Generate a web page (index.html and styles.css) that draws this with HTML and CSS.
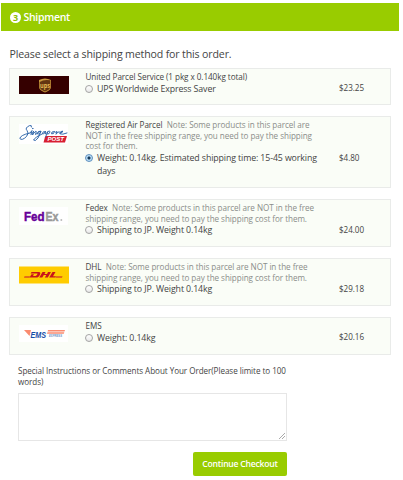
FILE: index.html
```html
<!DOCTYPE html>
<html lang="en">
<head>
<meta charset="utf-8">
<title>Shipment</title>
<link rel="stylesheet" href="styles.css">
</head>
<body>
<header class="bar">
  <span class="step">3</span><h1>Shipment</h1>
</header>
<main>
  <h2>Please select a shipping method for this order.</h2>
  <section class="method ups">
    <svg class="logo" width="50" height="18" viewBox="0 0 50 18">
      <rect width="50" height="18" fill="#350000"/>
      <path d="M20 4Q26 1 32 4V11Q32 14 26 16.500Q20 14 20 11Z" fill="#c8973c"/>
      <path d="M20.700 6Q25 3 31.300 4.300V11Q31 13.500 26 15.600Q21 13.500 20.700 11Z" fill="#633511"/>
      <text x="21" y="11.700" class="t-ups" textLength="10" lengthAdjust="spacingAndGlyphs">ups</text>
    </svg>
    <div class="info">
      <p class="name">United Parcel Service (1 pkg x 0.140kg total)</p>
      <label class="option"><i class="radio"></i><span>UPS Worldwide Express Saver</span></label>
    </div>
    <span class="price">$23.25</span>
  </section>
  <section class="method post">
    <svg class="logo" width="50" height="20" viewBox="0 0 50 20">
      <rect width="49" height="20" fill="#fff"/>
      <path d="M26 13L27 12H48L46 18.500H24.500Z" fill="#d81f32"/>
      <g fill="none" stroke="#2b63a8" stroke-width=".95" stroke-linecap="round" stroke-linejoin="round">
        <path d="M12.500 3Q13 .8 10.500 1.600Q5.500 4 8 6.500Q10.500 9 7.500 12.500Q3 17 .8 14.500Q1.500 11 11 9L13 6.500L11.800 10.500Q13 10.500 14.500 7.500"/>
        <path d="M14.500 7.500L13.500 11Q16.500 6.500 17.300 7.500L16.500 10.500Q17.500 10.500 18.800 8.500Q20 7 22 7.300Q18.500 7 18.300 9.800Q19.500 11.500 22 7.500L19 14Q16 18 14.500 16Q16 13 23 10"/>
        <path d="M26.500 7.500Q23.500 7 23.300 9.800Q24.500 11 26.500 7.500L26 10Q27 10 29 7.500L26.500 13M28.500 8Q31 6 31 8Q30.500 10.500 28 10M35 7.500Q32 7.500 32.500 9.800Q35 10.500 35.500 7.500Q36 9 38 7.500L37 10.300Q39 7 40.500 7.800M41 9.300Q45 8 43.500 7Q40.500 7.500 41 9.800Q43 11 48 9"/>
        <circle cx="13.700" cy="4.500" r=".2"/>
      </g>
      <text x="28.500" y="17.200" class="t-post" textLength="16.500" lengthAdjust="spacingAndGlyphs">POST</text>
    </svg>
    <div class="info">
      <p class="name">Registered Air Parcel <span class="note">Note: Some products in this parcel are<br>NOT in the free shipping range, you need to pay the shipping<br>cost for them.</span></p>
      <label class="option"><i class="radio on"></i><span>Weight: 0.14kg. Estimated shipping time: 15-45 working<br>days</span></label>
    </div>
    <span class="price">$4.80</span>
  </section>
  <section class="method fedex">
    <svg class="logo" width="50" height="18" viewBox="0 0 50 18">
      <rect width="49" height="18" fill="#fff"/>
      <text x="5" y="14" class="t-fedex" fill="#609" stroke="#609" textLength="20.500" lengthAdjust="spacingAndGlyphs">Fed</text>
      <text x="26.500" y="14" class="t-fedex" fill="#999" stroke="#999" textLength="13" lengthAdjust="spacingAndGlyphs">Ex</text>
      <circle cx="42.300" cy="13" r="1" fill="#bbb"/>
    </svg>
    <div class="info">
      <p class="name">Fedex <span class="note">Note: Some products in this parcel are NOT in the free<br>shipping range, you need to pay the shipping cost for them.</span></p>
      <label class="option"><i class="radio"></i><span>Shipping to JP. Weight 0.14kg</span></label>
    </div>
    <span class="price">$24.00</span>
  </section>
  <section class="method dhl">
    <svg class="logo" width="50" height="18" viewBox="0 0 50 18">
      <rect y=".5" width="50" height="17" fill="#fc0"/>
      <path d="M5.500 10.500H11L10.500 11.600H5ZM37 10.500H43.500L43 11.600H36.500Z" fill="#c8102e"/>
      <path d="M12.500 6H20Q22 6.300 21 8.500Q20 11.600 17 11.600H10.500L12.500 8.300H15L14 10H16.500Q18.500 9 18.500 7.500H11.600ZM23.500 6H26.500L25.500 8H28L29 6H32L28.800 11.600H25.800L27.300 9H24.800L23.300 11.600H20.300ZM33.500 6H36.500L34 10.300H37L36.200 11.600H30.200Z" fill="#c9141b"/>
    </svg>
    <div class="info">
      <p class="name">DHL <span class="note">Note: Some products in this parcel are NOT in the free<br>shipping range, you need to pay the shipping cost for them.</span></p>
      <label class="option"><i class="radio"></i><span>Shipping to JP. Weight 0.14kg</span></label>
    </div>
    <span class="price">$29.18</span>
  </section>
  <section class="method ems">
    <svg class="logo" width="50" height="18" viewBox="0 0 50 18">
      <rect width="49" height="17" fill="#fff"/>
      <path d="M5 5H12L10.500 11ZM29 5H46L45.500 6.500H28.600ZM28.400 7.200H45.300L44.800 8.700H28Z" fill="#fa8b70"/>
      <text x="11.500" y="12.500" class="t-ems" textLength="15.500" lengthAdjust="spacingAndGlyphs">EMS</text>
      <text x="30" y="12.200" class="t-express" textLength="13" lengthAdjust="spacingAndGlyphs">EXPRESS</text>
    </svg>
    <div class="info">
      <p class="name">EMS</p>
      <label class="option"><i class="radio"></i><span>Weight: 0.14kg</span></label>
    </div>
    <span class="price">$20.16</span>
  </section>
  <form class="comments">
    <label for="comments">Special Instructions or Comments About Your Order(Please limite to 100<br>words)</label>
    <textarea id="comments"></textarea>
    <button type="button">Continue Checkout</button>
  </form>
</main>
</body>
</html>
```
FILE: styles.css
```css
* { box-sizing: border-box; }
body { margin: 0; height: 480px; overflow: hidden; background: #fff; color: #444; font-family: "Open Sans", sans-serif; }
h1, h2, p { margin: 0; font-weight: 400; }
.bar { display: flex; align-items: center; margin: 3px 4px 0 1px; height: 28px; padding-left: 9px; background: #9c0; color: #fff; }
.step { width: 11px; height: 11px; border-radius: 50%; background: #fff; color: #8fbd00; font-size: 9px; font-weight: 700; line-height: 11px; text-align: center; }
.bar h1 { margin-left: 2.5px; font-size: 10.5px; font-weight: 600; line-height: 14px; letter-spacing: -.3px; }
main { padding: 15px 12px 0 9px; }
h2 { height: 22px; padding-left: .5px; font-size: 10.6px; line-height: 16px; letter-spacing: -.15px; }
.method { display: grid; grid-template-columns: 66.5px 253.5px 1fr; align-items: start; width: 382px; margin-bottom: 11px; padding: 3px 0 0 9px; border: 1px solid #e9ebe9; background: #fafdf7; }
.ups { height: 37px; }
.post { height: 72px; }
.fedex, .dhl { height: 48px; }
.ems { height: 38px; }
.logo { display: block; margin-top: 4px; }
.name { font-size: 8.15px; line-height: 10.7px; letter-spacing: -.06px; white-space: nowrap; }
.note { margin-left: 2.3px; color: #8b8d8a; }
.option { display: flex; font-size: 8.8px; line-height: 12.5px; letter-spacing: -.115px; white-space: nowrap; }
.radio { flex: none; width: 8px; height: 8px; margin: 2px 4px 0 -.5px; border: 1px solid #a4a4a4; border-radius: 50%; background: linear-gradient(#fff, #e8e8e8); }
.radio.on { border-color: #5f8fbd; background: radial-gradient(circle, #163958 0 1.3px, #b9def8 1.8px); }
.price { font-size: 8.1px; line-height: 11px; letter-spacing: -.05px; margin-top: 10px; }
.post .price { margin-top: 32px; }
.fedex .price, .dhl .price { margin-top: 21px; }
.comments { display: flex; flex-direction: column; width: 269px; margin: 0 0 0 9px; font-size: 8.1px; line-height: 10.7px; letter-spacing: -.055px; white-space: nowrap; }
textarea { width: 269px; height: 48px; margin: 6px 0 11px; border: 1px solid #e6e6e6; outline: 0; resize: none; background: linear-gradient(135deg, transparent 45%, #aaa 46% 54%, transparent 55% 68%, #aaa 69% 77%, transparent 78%) right 1px bottom 1px / 6px 6px no-repeat; }
button { align-self: flex-end; width: 94px; height: 24px; padding: 0; border: 0; border-radius: 2px; background: #9c0; color: #fff; font: 600 8.6px/24px "Open Sans", sans-serif; letter-spacing: -.23px; }
.t-ups { font: 700 7px "Open Sans", sans-serif; fill: #e6bb54; }
.t-post { font: italic 700 5.5px "Liberation Sans", sans-serif; fill: #fff; }
.t-fedex { font: 700 13.5px "Liberation Sans", sans-serif; stroke-width: .5px; }
.t-ems { font: italic 700 9px "Liberation Sans", sans-serif; fill: #174da5; }
.t-express { font: italic 700 3px "Liberation Sans", sans-serif; fill: #6f94c8; }
```
